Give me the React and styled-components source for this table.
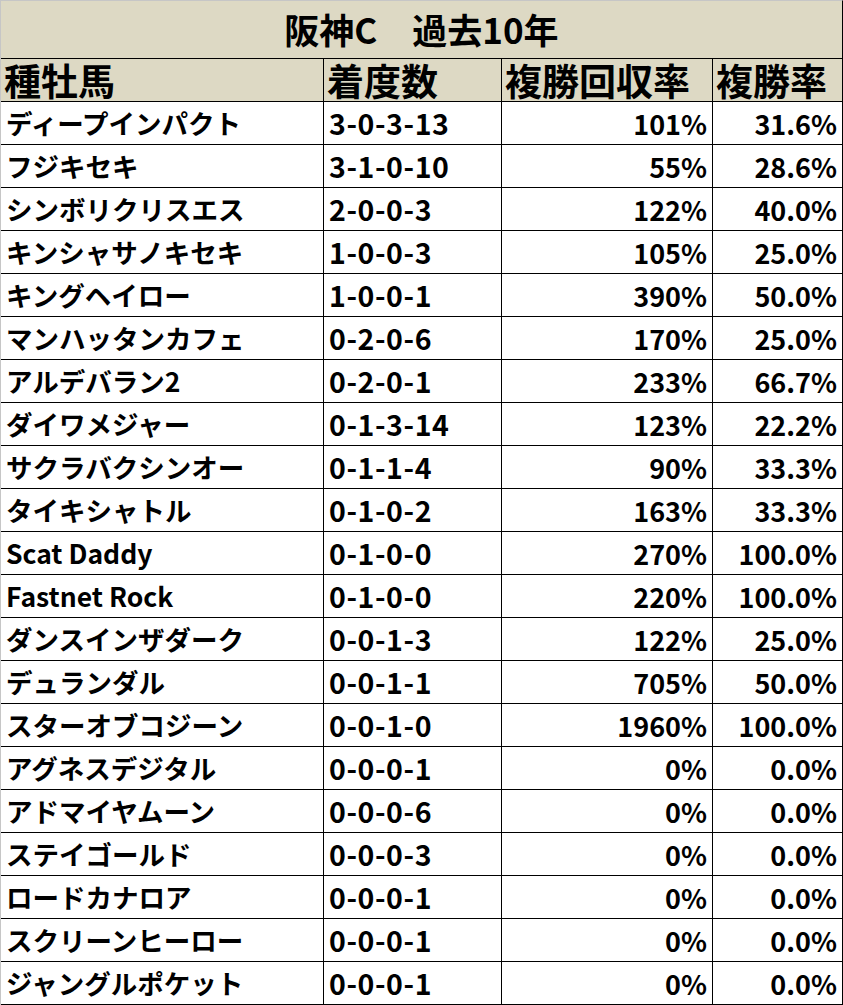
import React from "react";
import styled, { createGlobalStyle } from "styled-components";

const Global = createGlobalStyle`
  html, body { margin: 0; padding: 0; background: #ffffff; }
  body { font-family: "Noto Sans CJK JP", "Noto Sans", sans-serif; color: #000; }
`;

const Sheet = styled.div`
  width: 843px;
  box-sizing: border-box;
  border-left: 1px solid #c6c6c6;
  display: grid;
  grid-template-columns: 323px 178px 211px 130px;
`;

const Title = styled.div`
  grid-column: 1 / -1;
  height: 59px;
  box-sizing: border-box;
  border-top: 1px solid #c6c6c6;
  border-bottom: 1px solid #000;
  border-right: 1px solid #000;
  background: #ddd9c4;
  display: flex;
  align-items: center;
  justify-content: center;
  padding-bottom: 3px;
  font-size: 35px;
  line-height: 1;
  font-weight: 700;
  white-space: pre;
`;

const sizes = { head: "37px", name: "26.5px", record: "28.5px", rate: "27px" };

const Cell = styled.div`
  height: 43px;
  box-sizing: border-box;
  border-right: 1px solid #000;
  border-bottom: 1px solid #000;
  background: ${(p) => (p.$kind === "head" ? "#ddd9c4" : "#ffffff")};
  display: flex;
  align-items: center;
  justify-content: ${(p) => (p.$kind === "rate" ? "flex-end" : "flex-start")};
  padding: ${(p) =>
    p.$kind === "rate" ? "0 5px 0 0" : p.$kind === "head" ? "0 0 0 3px" : "0 0 0 5px"};
  font-size: ${(p) => sizes[p.$kind]};
  letter-spacing: ${(p) => (p.$kind === "record" ? "0.6px" : "0")};
  line-height: 1;
  font-weight: 700;
  white-space: nowrap;
`;

const rows = [
  ["ディープインパクト", "3-0-3-13", "101%", "31.6%"],
  ["フジキセキ", "3-1-0-10", "55%", "28.6%"],
  ["シンボリクリスエス", "2-0-0-3", "122%", "40.0%"],
  ["キンシャサノキセキ", "1-0-0-3", "105%", "25.0%"],
  ["キングヘイロー", "1-0-0-1", "390%", "50.0%"],
  ["マンハッタンカフェ", "0-2-0-6", "170%", "25.0%"],
  ["アルデバラン2", "0-2-0-1", "233%", "66.7%"],
  ["ダイワメジャー", "0-1-3-14", "123%", "22.2%"],
  ["サクラバクシンオー", "0-1-1-4", "90%", "33.3%"],
  ["タイキシャトル", "0-1-0-2", "163%", "33.3%"],
  ["Scat Daddy", "0-1-0-0", "270%", "100.0%"],
  ["Fastnet Rock", "0-1-0-0", "220%", "100.0%"],
  ["ダンスインザダーク", "0-0-1-3", "122%", "25.0%"],
  ["デュランダル", "0-0-1-1", "705%", "50.0%"],
  ["スターオブコジーン", "0-0-1-0", "1960%", "100.0%"],
  ["アグネスデジタル", "0-0-0-1", "0%", "0.0%"],
  ["アドマイヤムーン", "0-0-0-6", "0%", "0.0%"],
  ["ステイゴールド", "0-0-0-3", "0%", "0.0%"],
  ["ロードカナロア", "0-0-0-1", "0%", "0.0%"],
  ["スクリーンヒーロー", "0-0-0-1", "0%", "0.0%"],
  ["ジャングルポケット", "0-0-0-1", "0%", "0.0%"],
];

export default function App() {
  return (
    <>
      <Global />
      <Sheet>
        <Title>{"阪神C　過去10年"}</Title>
        <Cell $kind="head">種牡馬</Cell>
        <Cell $kind="head">着度数</Cell>
        <Cell $kind="head">複勝回収率</Cell>
        <Cell $kind="head">複勝率</Cell>
        {rows.map((r) => (
          <React.Fragment key={r[0]}>
            <Cell $kind="name">{r[0]}</Cell>
            <Cell $kind="record">{r[1]}</Cell>
            <Cell $kind="rate">{r[2]}</Cell>
            <Cell $kind="rate">{r[3]}</Cell>
          </React.Fragment>
        ))}
      </Sheet>
    </>
  );
}
